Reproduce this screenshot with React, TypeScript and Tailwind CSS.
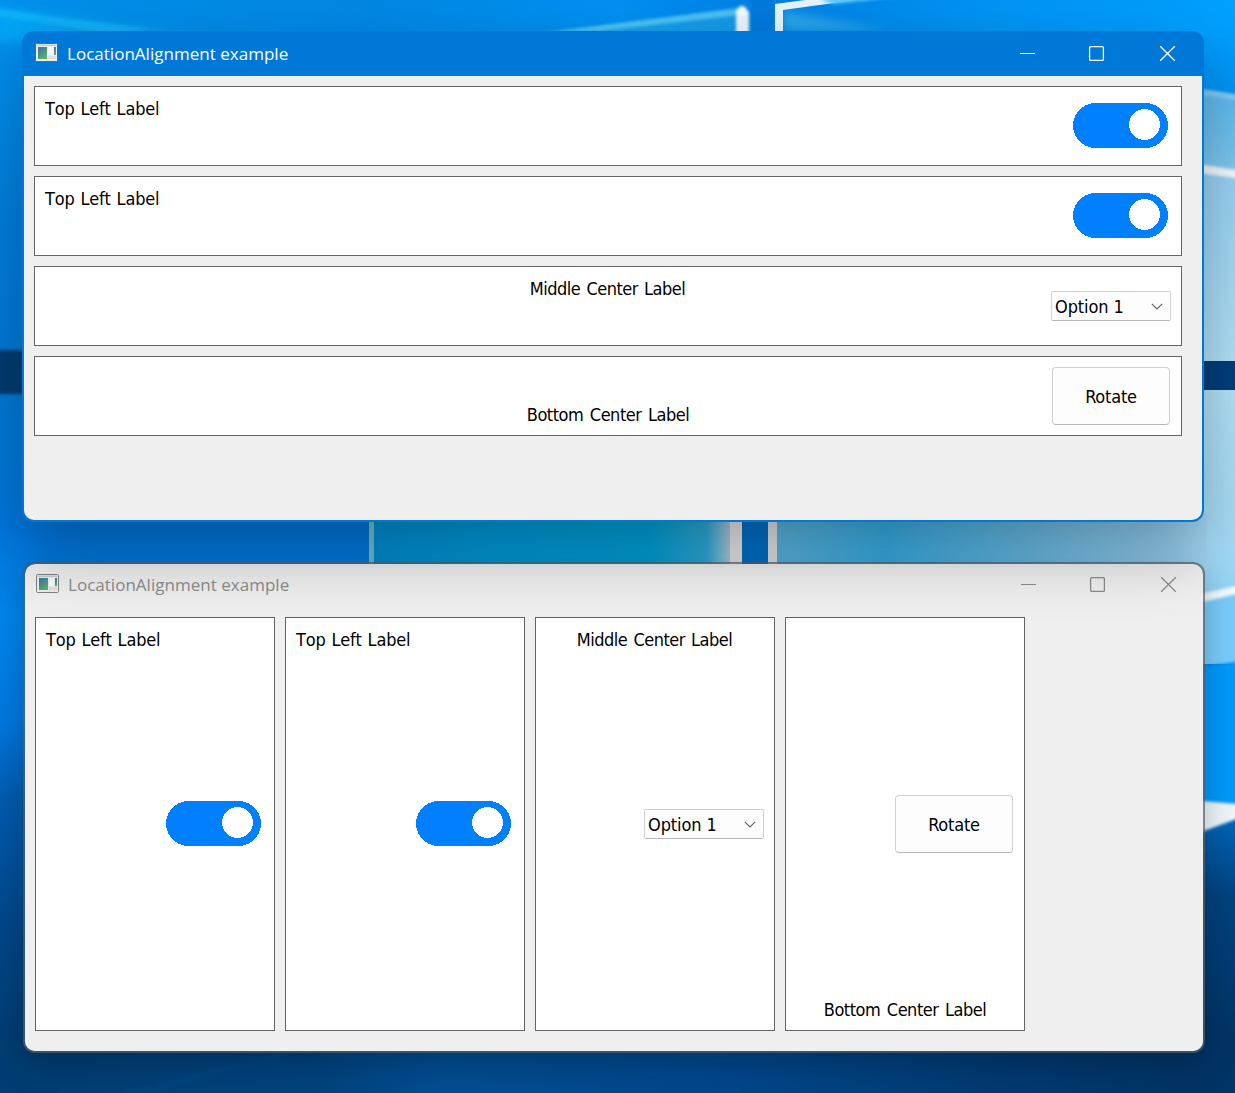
import type { ReactNode } from 'react';

const labelFont = 'font-["DejaVu_Sans_Condensed","DejaVu_Sans",sans-serif] text-[18px] leading-[22px] text-black whitespace-nowrap';

function Wallpaper() {
  return (
    <svg className="absolute inset-0" width="1235" height="1093" viewBox="0 0 1235 1093" preserveAspectRatio="none" aria-hidden="true">
      <defs>
        <linearGradient id="left" x1="0" y1="0" x2="0" y2="1">
          <stop offset="0" stopColor="#008ce6" />
          <stop offset="0.07" stopColor="#0090f0" />
          <stop offset="0.2" stopColor="#0080e0" />
          <stop offset="0.36" stopColor="#007ad8" />
          <stop offset="0.48" stopColor="#0078e0" />
          <stop offset="0.56" stopColor="#0086ee" />
          <stop offset="0.66" stopColor="#0078e0" />
          <stop offset="0.73" stopColor="#005cb0" />
          <stop offset="0.84" stopColor="#00488a" />
          <stop offset="0.95" stopColor="#003d72" />
          <stop offset="1" stopColor="#003d72" />
        </linearGradient>
        <linearGradient id="top" x1="0" y1="0" x2="1" y2="0">
          <stop offset="0" stopColor="#008fea" />
          <stop offset="0.3" stopColor="#0088e4" />
          <stop offset="0.5" stopColor="#0090f2" />
          <stop offset="0.62" stopColor="#0080e2" />
          <stop offset="0.8" stopColor="#0094f4" />
          <stop offset="1" stopColor="#00a0ff" />
        </linearGradient>
        <linearGradient id="corner" x1="0" y1="0" x2="0" y2="1">
          <stop offset="0" stopColor="#00a0ff" />
          <stop offset="1" stopColor="#0094f6" />
        </linearGradient>
        <linearGradient id="beam" x1="0" y1="0" x2="1" y2="0">
          <stop offset="0" stopColor="#00b4ff" />
          <stop offset="1" stopColor="#20a8e8" stopOpacity="0.5" />
        </linearGradient>
        <linearGradient id="right" x1="0" y1="0" x2="0" y2="1">
          <stop offset="0" stopColor="#58b8ee" />
          <stop offset="0.13" stopColor="#7cc8f2" />
          <stop offset="0.16" stopColor="#98d2f4" />
          <stop offset="0.5" stopColor="#b4e4fa" />
          <stop offset="0.8" stopColor="#a4dcf8" />
          <stop offset="1" stopColor="#78ccfa" />
        </linearGradient>
        <linearGradient id="gap" x1="0" y1="0" x2="1" y2="0">
          <stop offset="0" stopColor="#0092d8" />
          <stop offset="0.3" stopColor="#009cdc" />
          <stop offset="0.75" stopColor="#00a4dc" />
          <stop offset="0.9" stopColor="#30aede" />
          <stop offset="0.96" stopColor="#a8d0e4" />
          <stop offset="1" stopColor="#ececec" />
        </linearGradient>
        <linearGradient id="pane" x1="0" y1="0" x2="1" y2="0">
          <stop offset="0" stopColor="#5cb8e4" />
          <stop offset="0.25" stopColor="#38b0e8" />
          <stop offset="0.6" stopColor="#6cbee8" />
          <stop offset="1" stopColor="#a4d8f6" />
        </linearGradient>
        <linearGradient id="lower" x1="0" y1="0" x2="0" y2="1">
          <stop offset="0" stopColor="#0068be" />
          <stop offset="0.3" stopColor="#00427e" />
          <stop offset="0.8" stopColor="#003466" />
          <stop offset="1" stopColor="#003466" />
        </linearGradient>
        <linearGradient id="floor" x1="0" y1="0" x2="1" y2="0">
          <stop offset="0" stopColor="#003d72" />
          <stop offset="0.25" stopColor="#00427c" />
          <stop offset="0.36" stopColor="#004d92" />
          <stop offset="0.6" stopColor="#00468a" />
          <stop offset="0.8" stopColor="#003a72" />
          <stop offset="0.96" stopColor="#003466" />
        </linearGradient>
        <filter id="soft" x="-20%" y="-60%" width="140%" height="220%">
          <feGaussianBlur stdDeviation="1.6" />
        </filter>
        <filter id="haze" x="-20%" y="-60%" width="140%" height="220%">
          <feGaussianBlur stdDeviation="5" />
        </filter>
      </defs>

      <rect width="1235" height="1093" fill="url(#left)" />
      <rect width="1235" height="60" fill="url(#top)" />
      <rect y="31" width="30" height="60" fill="#008dec" />
      <path d="M-5 6L160 28L220 42H-5Z" fill="url(#beam)" opacity="0.65" filter="url(#haze)" />
      <path d="M-5 8L60 18L150 29L110 33L-5 16Z" fill="#16b8f8" opacity="0.65" filter="url(#soft)" />
      <path d="M580 30L738 12V36H580Z" fill="#20a8ea" opacity="0.6" filter="url(#soft)" />
      <path d="M540 33L738 8L740 15L600 31Z" fill="#5cccf4" opacity="0.8" filter="url(#soft)" />
      <path d="M783 31V10Q820 18 890 31Z" fill="#30acea" opacity="0.8" filter="url(#haze)" />
      <rect x="751" width="22" height="34" fill="#0079dc" />
      <rect x="736" y="11" width="13" height="24" fill="#e8f4f8" filter="url(#soft)" />
      <circle cx="742" cy="11" r="5" fill="#f4fcff" filter="url(#soft)" />
      <path d="M775 35V4L835 -4H885L783 10V35Z" fill="#e4f4fa" />
      <path d="M820 0L850 -3H900L835 4Z" fill="#50c4f8" filter="url(#soft)" />

      <rect y="350" x="-10" width="50" height="44" fill="#003c72" filter="url(#soft)" />

      <rect x="1195" y="88" width="40" height="575" fill="url(#right)" />
      <rect x="1204" y="20" width="40" height="68" fill="url(#corner)" />
      <path d="M1185 84H1250V97L1185 86Z" fill="#0094f6" filter="url(#soft)" />
      <path d="M1190 88L1250 97V102L1190 93Z" fill="#90d0f4" opacity="0.8" filter="url(#soft)" />
      <path d="M1190 163L1250 172V180L1190 172Z" fill="#f4fcff" filter="url(#soft)" />
      <rect x="1195" y="361" width="40" height="29" fill="#003f7a" />

      <rect x="370" y="515" width="374" height="55" fill="url(#gap)" />
      <rect x="369" y="515" width="5" height="55" fill="#70c4d8" />
      <rect x="730" y="515" width="12" height="55" fill="#ececec" />
      <rect x="742" y="515" width="26" height="55" fill="#0072cc" />
      <rect x="768" y="515" width="9" height="55" fill="#e4e8e8" />
      <rect x="777" y="515" width="430" height="55" fill="url(#pane)" />

      <path d="M1195 595L1240 589V664H1195Z" fill="#78ccfa" />
      <path d="M1190 596L1250 583V591L1190 605Z" fill="#f4fcff" filter="url(#soft)" />
      <path d="M1190 668L1250 660V835H1190Z" fill="#0098fa" filter="url(#soft)" />
      <path d="M1195 833L1240 812V1093H1195Z" fill="url(#lower)" />
      <path d="M1190 800L1250 805V814L1190 836Z" fill="#eef6fa" filter="url(#soft)" />

      <rect y="1046" width="1235" height="47" fill="url(#floor)" />
      <path d="M120 1093L275 1053H300L150 1093Z" fill="#004c88" opacity="0.35" filter="url(#soft)" />
    </svg>
  );
}

function AppIcon({ inactive = false }: { inactive?: boolean }) {
  const id = inactive ? 'screen-inactive' : 'screen-active';
  return (
    <svg width="23" height="19" viewBox="0 0 23 19" aria-hidden="true">
      <defs>
        <linearGradient id={id} x1="0" y1="0" x2="0.6" y2="1">
          <stop offset="0" stopColor="#4272a4" />
          <stop offset="0.5" stopColor="#46908a" />
          <stop offset="1" stopColor="#5cb06c" />
        </linearGradient>
      </defs>
      <rect x="0.5" y="0.5" width="22" height="18" rx="1" fill="#eceeee" stroke={inactive ? '#808388' : '#55697c'} />
      <rect x="1.5" y="1.5" width="20" height="1.5" fill="#c9cccf" />
      <rect x="3" y="4" width="9" height="12" fill={`url(#${id})`} />
      <rect x="13" y="4" width="5" height="8" fill="#fafafa" />
      <rect x="13" y="13" width="8" height="3" fill="#dfe1e2" />
      <rect x="19" y="4" width="2" height="8" fill={`url(#${id})`} />
    </svg>
  );
}

function TitleBar({ inactive = false }: { inactive?: boolean }) {
  return (
    <header className={`flex h-[43px] shrink-0 items-start ${inactive ? 'text-[#8b8b8b]' : 'text-white'}`}>
      <div className="mt-[10px] ml-[11px]">
        <AppIcon inactive={inactive} />
      </div>
      <h1 className="mt-[9px] ml-[9px] font-['Open_Sans',sans-serif] text-[17px] leading-[24px] font-normal tracking-[0.02px] whitespace-nowrap">
        LocationAlignment example
      </h1>
      <div className="mt-[12px] mr-[26px] ml-auto flex">
        <svg className="mr-[52px]" width="17" height="17" viewBox="0 0 17 17" stroke="currentColor" fill="none" aria-label="Minimize">
          <path d="M1 8.5H16" />
        </svg>
        <svg className="mr-[54px]" width="17" height="17" viewBox="0 0 17 17" stroke="currentColor" fill="none" aria-label="Maximize">
          <rect x="1.6" y="1.6" width="13.8" height="13.8" rx="1.2" strokeWidth="1.3" />
        </svg>
        <svg width="17" height="17" viewBox="0 0 17 17" stroke="currentColor" fill="none" aria-label="Close">
          <path d="M1.2 1.2L15.8 15.8M15.8 1.2L1.2 15.8" strokeWidth="1.3" />
        </svg>
      </div>
    </header>
  );
}

/* Label and control share a single grid cell, each aligned on its own. */
function Panel({ label, control, vertical }: { label: ReactNode; control: ReactNode; vertical: boolean }) {
  return (
    <section className={`grid border border-[#646464] bg-white ${vertical ? 'h-[414px] w-[240px]' : 'h-[80px]'}`}>
      {label}
      {control}
    </section>
  );
}

function Toggle() {
  return (
    <svg className="col-start-1 row-start-1 mr-[13px] mb-[1px] self-center justify-self-end" width="95" height="45" viewBox="0 0 95 45" shapeRendering="crispEdges" role="switch" aria-checked="true">
      <rect width="95" height="45" rx="22.5" fill="#0080ff" />
      <circle cx="71.5" cy="21.5" r="15.5" fill="#fff" />
    </svg>
  );
}

function Combo() {
  return (
    <div className={`${labelFont} col-start-1 row-start-1 mr-[10px] flex h-[30px] w-[120px] items-center justify-between self-center justify-self-end rounded-[2px] border border-[#d0d0d0] border-b-[#b8b8b8] bg-[#fdfdfd] pr-[7px] pl-[3px]`}>
      <span className="pt-[2px] tracking-[-0.1px]">Option 1</span>
      <svg width="12" height="7" viewBox="0 0 12 7" fill="none" stroke="#606060" strokeWidth="1.1" aria-hidden="true">
        <path d="M0.8 0.8L6 6L11.2 0.8" />
      </svg>
    </div>
  );
}

function RotateButton() {
  return (
    <button className={`${labelFont} col-start-1 row-start-1 mr-[11px] h-[58px] w-[118px] self-center justify-self-end rounded-[4px] border border-[#d0d0d0] border-b-[#b8b8b8] bg-[#fdfdfd] pt-[2px] tracking-[-0.2px]`}>
      Rotate
    </button>
  );
}

function Panels({ vertical = false }: { vertical?: boolean }) {
  const topLeft = <span className={`${labelFont} col-start-1 row-start-1 mt-[11px] ml-[10px] self-start justify-self-start tracking-[-0.2px] [font-kerning:none] [word-spacing:1px]`}>Top Left Label</span>;
  const middle = <span className={`${labelFont} col-start-1 row-start-1 mt-[11px] self-start justify-self-center pr-[1px] tracking-[-0.5px] [word-spacing:1.5px]`}>Middle Center Label</span>;
  const bottom = <span className={`${labelFont} col-start-1 row-start-1 mb-[9px] self-end justify-self-center tracking-[-0.5px] [word-spacing:2px]`}>Bottom Center Label</span>;
  return (
    <main className={`flex grow gap-[10px] bg-[#efefef] p-[10px] ${vertical ? '' : 'flex-col rounded-b-[10px] pr-[20px]'}`}>
      <Panel vertical={vertical} label={topLeft} control={<Toggle />} />
      <Panel vertical={vertical} label={topLeft} control={<Toggle />} />
      <Panel vertical={vertical} label={middle} control={<Combo />} />
      <Panel vertical={vertical} label={bottom} control={<RotateButton />} />
    </main>
  );
}

export default function App() {
  return (
    <div className="relative h-[1093px] w-[1235px] overflow-hidden">
      <Wallpaper />
      <div className="absolute top-[562px] left-[23px] flex h-[491px] w-[1182px] flex-col overflow-hidden rounded-[12px] border-2 border-[#50606c]/70 bg-[#efefef] bg-clip-padding shadow-[0_10px_32px_rgba(0,0,0,0.25)]">
        <TitleBar inactive />
        <Panels vertical />
      </div>
      <div className="absolute top-[31px] left-[22px] flex h-[491px] w-[1182px] flex-col rounded-[12px] border-2 border-[#0078d7] bg-[#0078d7] shadow-[0_30px_64px_rgba(0,0,0,0.3)]">
        <TitleBar />
        <Panels />
      </div>
    </div>
  );
}
